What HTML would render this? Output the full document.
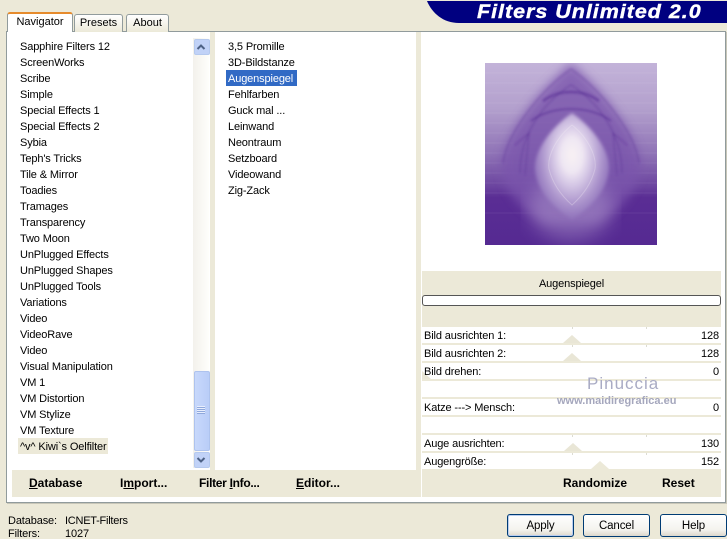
<!DOCTYPE html>
<html><head><meta charset="utf-8">
<style>
html,body{margin:0;padding:0;overflow:hidden}
body{width:727px;height:539px;overflow:hidden;background:#ece9d8;position:relative;font-family:"Liberation Sans",sans-serif;font-size:11px;color:#000;letter-spacing:-.13px}
.a{position:absolute}
.t{position:absolute;white-space:nowrap;line-height:16px;height:16px}
.l{margin-top:1px}
.b{font-weight:bold;font-size:12px;letter-spacing:0}
.btn{position:absolute;top:514px;height:21px;width:65px;border:1px solid #003c74;border-radius:3px;background:linear-gradient(#fff,#f4f3ee 70%,#dcd8cc);text-align:center;line-height:23px;font-size:11.5px}
.tab{position:absolute;box-sizing:border-box;border:1px solid #919b9c;border-bottom:0;border-radius:3px 3px 0 0;background:linear-gradient(#fff,#ece9d8);text-align:center;font-size:11px;letter-spacing:0}
.sep{position:absolute;left:422px;width:299px;height:2px;background:#ece9d8}
.tri{position:absolute;width:0;height:0;border-left:9px solid transparent;border-right:9px solid transparent;border-bottom:8px solid #e9e6d6}
.tick{position:absolute;width:1px;height:2px;background:#dcdcd2}
</style></head><body>
<div class="a" style="left:6px;top:31px;width:718px;height:470px;border:1px solid #919b9c;background:#fff;box-shadow:1px 1px 0 #c8c6b8"></div>
<div class="tab" style="left:74px;top:14px;width:49px;height:18px;line-height:17px">Presets</div>
<div class="tab" style="left:126px;top:14px;width:43px;height:18px;line-height:17px">About</div>
<div class="tab" style="left:7px;top:12px;width:66px;height:20px;line-height:16px;background:#fff;border-top:2px solid #e68b2c;border-color:#e68b2c #919b9c #fff;z-index:2">Navigator</div>

<svg class="a" style="left:427px;top:1px" width="300" height="22"><path d="M0 0H300V22H32C16 22 5 12 0 0Z" fill="#000080"/></svg>
<div class="t" style="left:477px;top:1px;height:22px;line-height:22px;font-size:19.5px;font-weight:bold;font-style:italic;color:#fff;letter-spacing:.9px;transform:scaleX(1.1);transform-origin:0 50%;-webkit-text-stroke:.4px #fff">Filters Unlimited 2.0</div>

<div class="a" style="left:210px;top:32px;width:5px;height:438px;background:#ece9d8"></div>
<div class="a" style="left:416px;top:32px;width:5px;height:465px;background:#ece9d8"></div>

<div class="a" style="left:193px;top:38px;width:16px;height:430px;background:linear-gradient(90deg,#f3f1ec,#fefefb)"></div>
<div class="a" style="left:194px;top:39px;width:14px;height:14px;border:1px solid #b5c9ee;border-radius:2px;background:#c1d2f7"></div>
<svg class="a" style="left:196px;top:43px" width="12" height="8"><path d="M1.5 6 L5 2.5 L8.5 6" fill="none" stroke="#4d6185" stroke-width="2"/></svg>
<div class="a" style="left:194px;top:371px;width:14px;height:78px;border:1px solid #aec3ee;border-radius:2px;background:linear-gradient(90deg,#c8d8fb,#b9cdf8)"></div>
<div class="a" style="left:197px;top:406px;width:8px;height:8px;background:repeating-linear-gradient(#e8eefd 0 1px,#8fa8dc 1px 2px)"></div>
<div class="a" style="left:194px;top:452px;width:14px;height:14px;border:1px solid #b5c9ee;border-radius:2px;background:#c1d2f7"></div>
<svg class="a" style="left:196px;top:456px" width="12" height="8"><path d="M1.5 2 L5 5.5 L8.5 2" fill="none" stroke="#4d6185" stroke-width="2"/></svg>

<div class="t l" style="left:20px;top:38px">Sapphire Filters 12</div>
<div class="t l" style="left:20px;top:54px">ScreenWorks</div>
<div class="t l" style="left:20px;top:70px">Scribe</div>
<div class="t l" style="left:20px;top:86px">Simple</div>
<div class="t l" style="left:20px;top:102px">Special Effects 1</div>
<div class="t l" style="left:20px;top:118px">Special Effects 2</div>
<div class="t l" style="left:20px;top:134px">Sybia</div>
<div class="t l" style="left:20px;top:150px">Teph's Tricks</div>
<div class="t l" style="left:20px;top:166px">Tile &amp; Mirror</div>
<div class="t l" style="left:20px;top:182px">Toadies</div>
<div class="t l" style="left:20px;top:198px">Tramages</div>
<div class="t l" style="left:20px;top:214px">Transparency</div>
<div class="t l" style="left:20px;top:230px">Two Moon</div>
<div class="t l" style="left:20px;top:246px">UnPlugged Effects</div>
<div class="t l" style="left:20px;top:262px">UnPlugged Shapes</div>
<div class="t l" style="left:20px;top:278px">UnPlugged Tools</div>
<div class="t l" style="left:20px;top:294px">Variations</div>
<div class="t l" style="left:20px;top:310px">Video</div>
<div class="t l" style="left:20px;top:326px">VideoRave</div>
<div class="t l" style="left:20px;top:342px">Video</div>
<div class="t l" style="left:20px;top:358px">Visual Manipulation</div>
<div class="t l" style="left:20px;top:374px">VM 1</div>
<div class="t l" style="left:20px;top:390px">VM Distortion</div>
<div class="t l" style="left:20px;top:406px">VM Stylize</div>
<div class="t l" style="left:20px;top:422px">VM Texture</div>
<div class="a" style="left:18px;top:438px;width:90px;height:16px;background:#ece9d8"></div>
<div class="t l" style="left:20px;top:438px">^v^ Kiwi`s Oelfilter</div>

<div class="t l" style="left:228px;top:38px">3,5 Promille</div>
<div class="t l" style="left:228px;top:54px">3D-Bildstanze</div>
<div class="a" style="left:226px;top:70px;width:71px;height:16px;background:#316ac5"></div>
<div class="t l" style="left:228px;top:70px;color:#fff">Augenspiegel</div>
<div class="t l" style="left:228px;top:86px">Fehlfarben</div>
<div class="t l" style="left:228px;top:102px">Guck mal ...</div>
<div class="t l" style="left:228px;top:118px">Leinwand</div>
<div class="t l" style="left:228px;top:134px">Neontraum</div>
<div class="t l" style="left:228px;top:150px">Setzboard</div>
<div class="t l" style="left:228px;top:166px">Videowand</div>
<div class="t l" style="left:228px;top:182px">Zig-Zack</div>

<div class="a" style="left:12px;top:470px;width:404px;height:27px;background:#ece9d8"></div>
<div class="t b" style="left:29px;top:475px"><u>D</u>atabase</div>
<div class="t b" style="left:120px;top:475px">I<u>m</u>port...</div>
<div class="t b" style="left:199px;top:475px;letter-spacing:-.3px">Filter <u>I</u>nfo...</div>
<div class="t b" style="left:296px;top:475px"><u>E</u>ditor...</div>

<svg class="a" style="left:485px;top:63px" width="172" height="182" viewBox="0 0 172 182">
<defs>
<linearGradient id="g" x1="0" y1="0" x2="0" y2="1">
<stop offset="0" stop-color="#c3b3d9"/><stop offset=".25" stop-color="#b3a0cd"/><stop offset=".5" stop-color="#8f73b6"/><stop offset=".68" stop-color="#6b449f"/><stop offset=".74" stop-color="#5a2d94"/><stop offset="1" stop-color="#552a92"/>
</linearGradient>
<radialGradient id="l" gradientUnits="userSpaceOnUse" cx="0" cy="0" r="1" gradientTransform="translate(87 92) scale(38 62)">
<stop offset="0" stop-color="#f8f1f3"/><stop offset=".28" stop-color="#efe7f3"/><stop offset=".5" stop-color="#d3c5e4"/><stop offset=".78" stop-color="#ad96cd"/><stop offset="1" stop-color="#9377bd"/>
</radialGradient>
<filter id="s"><feGaussianBlur stdDeviation="1"/></filter>
<filter id="n"><feGaussianBlur stdDeviation="1.6"/></filter>
<filter id="m"><feGaussianBlur stdDeviation="5"/></filter>
<filter id="h"><feGaussianBlur stdDeviation="9"/></filter>
</defs>
<rect width="172" height="182" fill="url(#g)"/>
<g stroke="#fff" stroke-opacity=".07"><path d="M0 10H172M0 20H172M0 30H172M0 40H172M0 50H172M0 60H172M0 70H172M0 80H172M0 90H172M0 100H172M0 110H172M0 120H172M0 130H172M0 150H172"/></g>
<path d="M86 0C70 15 25 55 16 100C18 130 40 150 60 160H112C132 150 154 130 156 100C147 55 102 15 86 0Z" fill="#7a55ac" opacity=".8" filter="url(#m)"/>
<g filter="url(#s)" fill="none" stroke="#562b93" stroke-opacity=".5">
<path d="M86 6C55 28 22 70 18 100M86 6C117 28 150 70 154 100"/>
<path d="M86 22C60 38 35 70 35 110M86 22C112 38 137 70 137 110"/>
<path d="M58 38C74 26 98 26 114 38" stroke-width="3"/>
<path d="M46 58C66 42 106 42 126 58" stroke-width="2"/>
<path d="M30 82L44 70L40 112M142 82L128 70L132 112"/>
</g>
<ellipse cx="86" cy="145" rx="42" ry="32" fill="#b7a3d2" opacity=".42" filter="url(#h)"/>
<path d="M87 50C64 66 48 90 50 108C53 130 70 146 87 156C104 146 121 130 124 108C126 90 110 66 87 50Z" fill="url(#l)" filter="url(#n)"/>
<path d="M87 62C72 74 62 92 64 106C68 122 78 134 87 142C96 134 106 122 110 106C112 92 102 74 87 62Z" fill="none" stroke="#f4eef6" stroke-opacity=".3"/>
</svg>

<div class="a" style="left:422px;top:271px;width:299px;height:56px;background:#ece9d8"></div>
<div class="t" style="left:422px;top:276px;width:299px;text-align:center">Augenspiegel</div>
<div class="a" style="left:422px;top:295px;width:297px;height:9px;border:1px solid #555;border-radius:3px;background:#fff"></div>

<div class="sep" style="top:343px"></div>
<div class="sep" style="top:361px"></div>
<div class="sep" style="top:379px"></div>
<div class="sep" style="top:397px"></div>
<div class="sep" style="top:415px"></div>
<div class="sep" style="top:433px"></div>
<div class="sep" style="top:451px"></div>
<div class="tick" style="left:572px;top:327px"></div><div class="tick" style="left:646px;top:327px"></div>
<div class="tick" style="left:572px;top:345px"></div><div class="tick" style="left:646px;top:345px"></div>
<div class="tick" style="left:572px;top:435px"></div><div class="tick" style="left:646px;top:435px"></div>
<div class="tick" style="left:572px;top:453px"></div><div class="tick" style="left:646px;top:453px"></div>
<div class="tri" style="left:563px;top:335px"></div>
<div class="tri" style="left:563px;top:353px"></div>
<div class="tri" style="left:422px;top:371px;border-left-width:0"></div>
<div class="tri" style="left:564px;top:443px"></div>
<div class="a" style="left:422px;top:469px;width:299px;height:28px;background:#ece9d8"></div>
<div class="tri" style="left:591px;top:461px;border-bottom-color:#ece9d8"></div>

<div class="t" style="left:424px;top:328px">Bild ausrichten 1:</div><div class="t" style="left:660px;top:328px;width:59px;text-align:right">128</div>
<div class="t" style="left:424px;top:346px">Bild ausrichten 2:</div><div class="t" style="left:660px;top:346px;width:59px;text-align:right">128</div>
<div class="t" style="left:424px;top:364px">Bild drehen:</div><div class="t" style="left:660px;top:364px;width:59px;text-align:right">0</div>
<div class="t" style="left:424px;top:400px">Katze ---&gt; Mensch:</div><div class="t" style="left:660px;top:400px;width:59px;text-align:right">0</div>
<div class="t" style="left:424px;top:436px">Auge ausrichten:</div><div class="t" style="left:660px;top:436px;width:59px;text-align:right">130</div>
<div class="t" style="left:424px;top:454px">Augengröße:</div><div class="t" style="left:660px;top:454px;width:59px;text-align:right">152</div>

<div class="t" style="left:587px;top:375px;height:18px;line-height:18px;font-size:17px;color:#a9abc4;letter-spacing:1px">Pinuccia</div>
<div class="t" style="left:557px;top:393px;font-size:11px;font-weight:bold;color:#a5a7bd;letter-spacing:0">www.maidiregrafica.eu</div>

<div class="t b" style="left:563px;top:475px">Randomize</div>
<div class="t b" style="left:662px;top:475px">Reset</div>

<div class="t" style="left:8px;top:513px">Database:</div>
<div class="t" style="left:65px;top:513px;letter-spacing:-.25px">ICNET-Filters</div>
<div class="t" style="left:8px;top:526px">Filters:</div>
<div class="t" style="left:65px;top:526px">1027</div>

<div class="btn" style="left:507px;box-shadow:inset 0 0 0 1px #b9cdf0">Apply</div>
<div class="btn" style="left:583px">Cancel</div>
<div class="btn" style="left:660px">Help</div>
</body></html>
